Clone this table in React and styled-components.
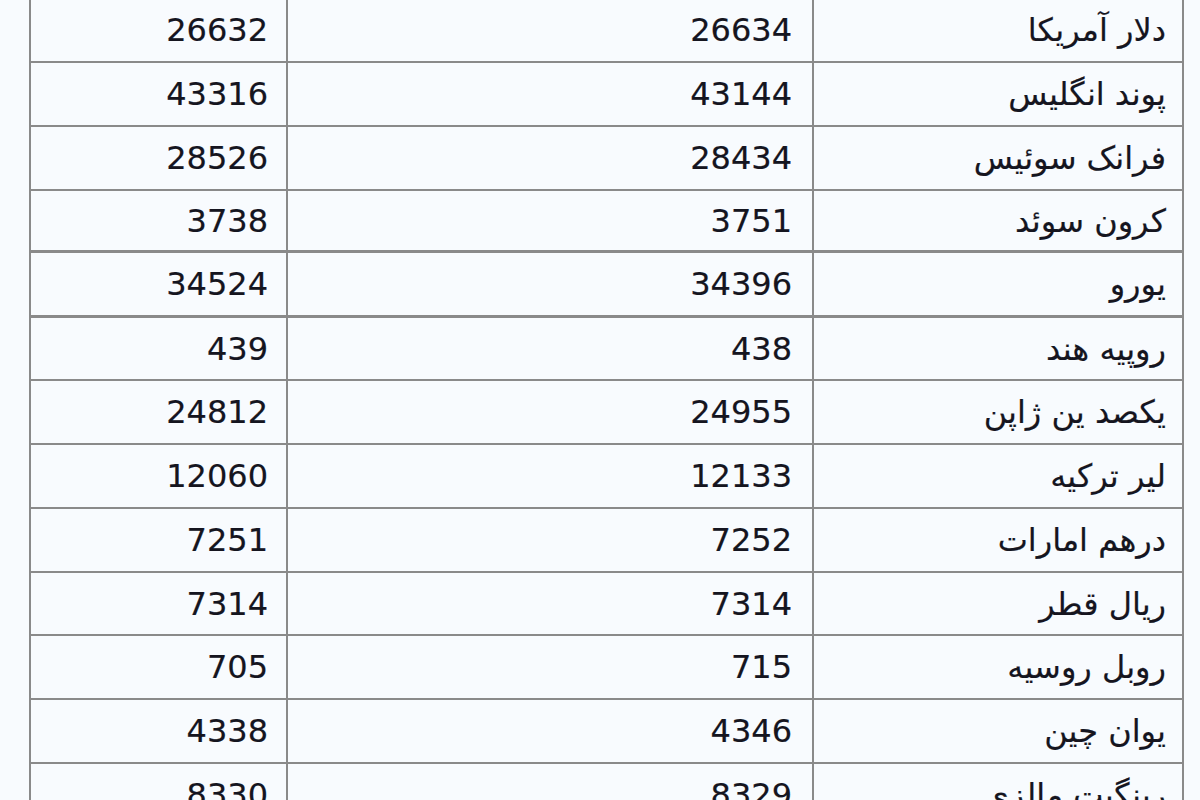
import React from 'react'
import styled, { createGlobalStyle } from 'styled-components'

const GlobalStyle = createGlobalStyle`
    html, body {
        margin: 0;
        padding: 0;
        overflow: hidden;
        background: #f8fbfe;
    }
`

const Page = styled.div`
    padding: 0 15px 0 29px;
    margin-top: -3px;
    font-family: "DejaVu Sans", Tahoma, sans-serif;
`

const Table = styled.table`
    border-collapse: collapse;
    direction: rtl;
    background: #f8fbfe;
    border: 2px solid #8a8a8a;
`

const Row = styled.tr`
    border-top: ${p => (p.$thick ? '3px' : '2px')} solid #8a8a8a;
`

const Cell = styled.td`
    width: ${p => p.$w}px;
    height: ${p => p.$h}px;
    padding: 0 ${p => p.$pad}px 0 0;
    border: 2px solid #8a8a8a;
    text-align: right;
    vertical-align: middle;
    font-size: 32px;
    color: #15151f;
    -webkit-text-stroke: 0.2px #15151f;
    white-space: nowrap;
`

// name, buy, sell, row height, thick top line
const rates = [
    ['دلار آمریکا', '26634', '26632', 62],
    ['پوند انگلیس', '43144', '43316', 62],
    ['فرانک سوئیس', '28434', '28526', 62],
    ['کرون سوئد', '3751', '3738', 59],
    ['یورو', '34396', '34524', 62, true],
    ['روپیه هند', '438', '439', 61, true],
    ['یکصد ین ژاپن', '24955', '24812', 62],
    ['لیر ترکیه', '12133', '12060', 62],
    ['درهم امارات', '7252', '7251', 62],
    ['ریال قطر', '7314', '7314', 61],
    ['روبل روسیه', '715', '705', 62],
    ['یوان چین', '4346', '4338', 62],
    ['رینگیت مالزی', '8329', '8330', 62],
]

const App = () => {
    return (
        <Page>
            <GlobalStyle />
            <Table>
                <tbody>
                    {rates.map(([name, buy, sell, h, thick]) => (
                        <Row key={name} $thick={thick}>
                            <Cell $w={352} $h={h} $pad={16}>{name}</Cell>
                            <Cell $w={504} $h={h} $pad={20}>{buy}</Cell>
                            <Cell $w={237} $h={h} $pad={18}>{sell}</Cell>
                        </Row>
                    ))}
                </tbody>
            </Table>
        </Page>
    )
}

export default App
